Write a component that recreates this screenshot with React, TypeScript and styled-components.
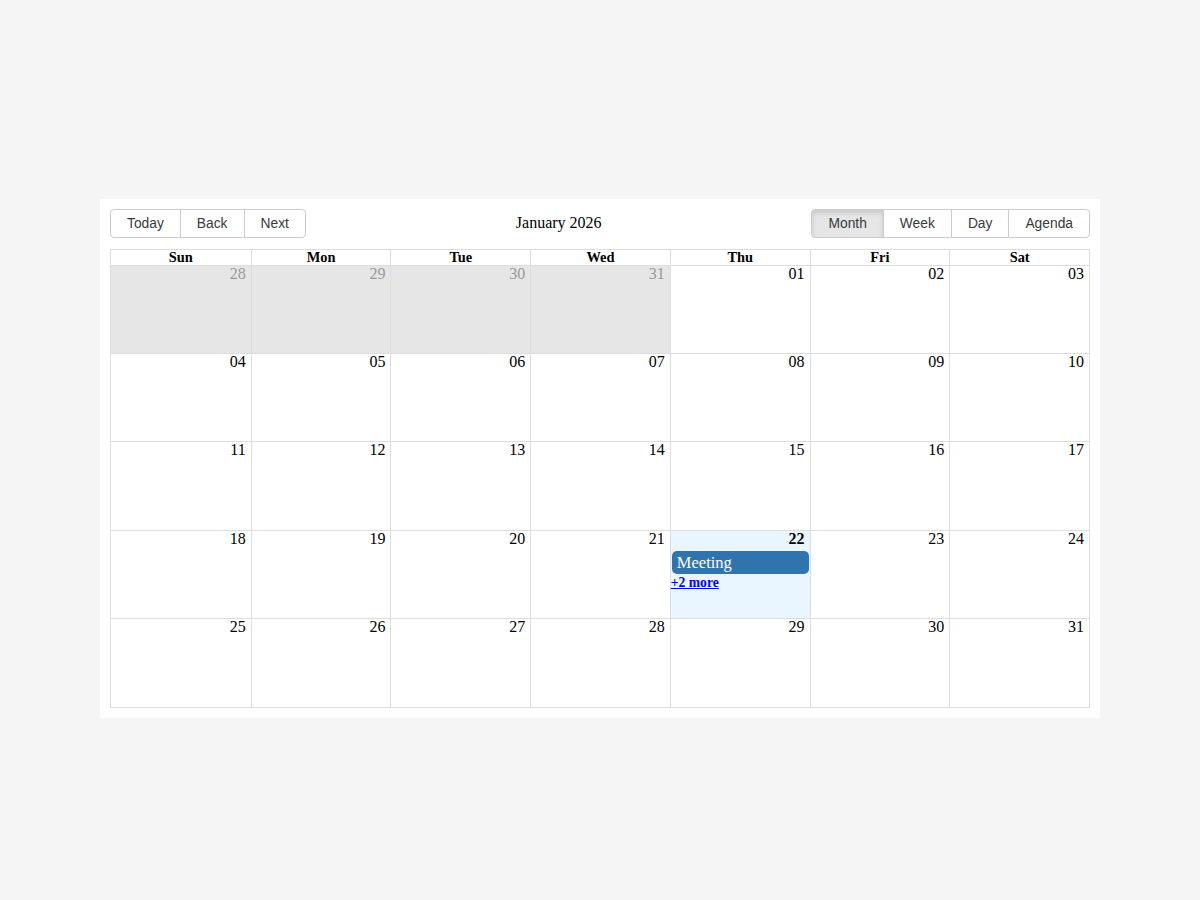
import styled, { createGlobalStyle } from "styled-components";

const GlobalStyle = createGlobalStyle`
  html, body {
    margin: 0;
    padding: 0;
    background: #f5f5f5;
    font-family: "Liberation Serif", "Times New Roman", serif;
  }
`;

const Page = styled.div`
  width: 1200px;
  height: 900px;
  box-sizing: border-box;
  padding-top: 16px;
  display: flex;
  align-items: center;
  justify-content: center;
`;

const Panel = styled.div`
  width: 980px;
  padding: 10px;
  background: #fff;
`;

const Toolbar = styled.div`
  display: flex;
  align-items: center;
  margin-bottom: 11px;
  font-size: 16px;
`;

const Label = styled.span`
  flex: 1;
  text-align: center;
  padding: 0 10px;
  margin-top: -1px;
`;

const Group = styled.div`
  display: inline-flex;
`;

const Button = styled.button<{ $active?: boolean }>`
  font-family: "Liberation Sans", Arial, sans-serif;
  font-size: 13.8px;
  color: #373a3c;
  background: ${(p) => (p.$active ? "#e6e6e6" : "#fff")};
  box-shadow: ${(p) => (p.$active ? "inset 0 3px 5px rgba(0,0,0,0.125)" : "none")};
  border: 1px solid #ccc;
  padding: 6px 16px;
  line-height: 15px;
  margin: 0;
  border-radius: 0;
  cursor: pointer;

  & + & {
    margin-left: -1px;
  }
  &:first-child {
    border-radius: 4px 0 0 4px;
  }
  &:last-child {
    border-radius: 0 4px 4px 0;
  }
`;

const Month = styled.div`
  height: 459px;
  display: flex;
  flex-direction: column;
  border: 1px solid #ddd;
  box-sizing: border-box;
`;

const HeaderRow = styled.div`
  display: grid;
  grid-template-columns: repeat(7, 1fr);
  border-bottom: 1px solid #ddd;
`;

const HeaderCell = styled.div`
  font-weight: bold;
  font-size: 14.4px;
  text-align: center;
  line-height: 15px;
  padding: 0 3px;
  & + & {
    border-left: 1px solid #ddd;
  }
`;

const Week = styled.div`
  flex: 1;
  display: grid;
  grid-template-columns: repeat(7, 1fr);
  & + & {
    border-top: 1px solid #ddd;
  }
`;

const Day = styled.div<{ $off?: boolean; $today?: boolean }>`
  background: ${(p) => (p.$off ? "#e6e6e6" : p.$today ? "#eaf6ff" : "#fff")};
  color: ${(p) => (p.$off ? "#999" : "#000")};
  display: flex;
  flex-direction: column;
  min-width: 0;
  & + & {
    border-left: 1px solid #ddd;
  }
`;

const DateNum = styled.div<{ $today?: boolean }>`
  text-align: right;
  padding-right: 5px;
  padding-bottom: 4px;
  font-size: 16px;
  line-height: 16px;
  font-weight: ${(p) => (p.$today ? "bold" : "normal")};
`;

const Segment = styled.div`
  padding: 0 1px 1px 1px;
`;

const Event = styled.div`
  background: #3174ad;
  color: #fff;
  border-radius: 5px;
  padding: 2px 5px;
  font-size: 16.5px;
  line-height: 19px;
`;

const More = styled.a`
  color: #0000ee;
  font-weight: bold;
  font-size: 13.6px;
  text-decoration: underline;
  line-height: 16px;
  cursor: pointer;
`;

const days = ["Sun", "Mon", "Tue", "Wed", "Thu", "Fri", "Sat"];

const pad = (n: number) => (n < 10 ? `0${n}` : `${n}`);

const cells: { n: number; off: boolean }[] = [];
[28, 29, 30, 31].forEach((n) => cells.push({ n, off: true }));
for (let i = 1; i <= 31; i++) cells.push({ n: i, off: false });

const weeks: { n: number; off: boolean }[][] = [];
for (let i = 0; i < cells.length; i += 7) weeks.push(cells.slice(i, i + 7));

export default function App() {
  return (
    <>
      <GlobalStyle />
      <Page>
        <Panel>
          <Toolbar>
            <Group>
              <Button>Today</Button>
              <Button>Back</Button>
              <Button>Next</Button>
            </Group>
            <Label>January 2026</Label>
            <Group>
              <Button $active>Month</Button>
              <Button>Week</Button>
              <Button>Day</Button>
              <Button>Agenda</Button>
            </Group>
          </Toolbar>
          <Month>
            <HeaderRow>
              {days.map((d) => (
                <HeaderCell key={d}>{d}</HeaderCell>
              ))}
            </HeaderRow>
            {weeks.map((w, wi) => (
              <Week key={wi}>
                {w.map((c) => {
                  const today = !c.off && c.n === 22;
                  return (
                    <Day key={`${c.off}-${c.n}`} $off={c.off} $today={today}>
                      <DateNum $today={today}>{pad(c.n)}</DateNum>
                      {today && (
                        <>
                          <Segment>
                            <Event>Meeting</Event>
                          </Segment>
                          <More>+2 more</More>
                        </>
                      )}
                    </Day>
                  );
                })}
              </Week>
            ))}
          </Month>
        </Panel>
      </Page>
    </>
  );
}
